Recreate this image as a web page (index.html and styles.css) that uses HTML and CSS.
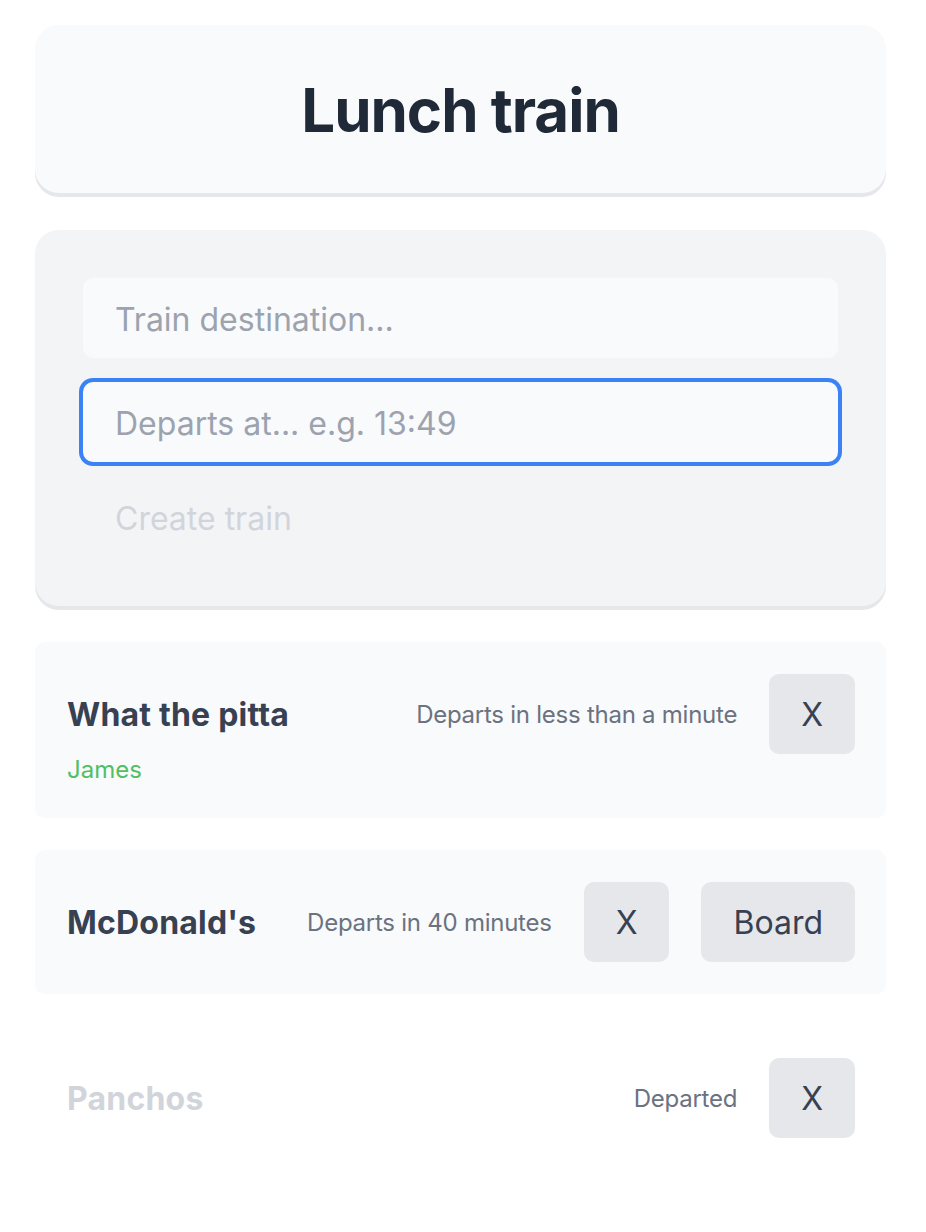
FILE: index.html
```html
<!DOCTYPE html>
<html lang="en">
<head>
<meta charset="utf-8">
<title>Lunch train</title>
<link rel="stylesheet" href="styles.css">
</head>
<body>
<main class="app">
  <header class="header-card">
    <h1 class="title">Lunch train</h1>
  </header>

  <form class="form-card">
    <input class="field" type="text" placeholder="Train destination...">
    <input class="field field-focus" type="text" placeholder="Departs at... e.g. 13:49">
    <button class="create-btn" type="button" disabled>Create train</button>
  </form>

  <section class="trains">
    <article class="train">
      <div class="train-row">
        <h2 class="train-name">What the pitta</h2>
        <div class="train-actions">
          <span class="train-status">Departs in less than a minute</span>
          <button class="btn" type="button">X</button>
        </div>
      </div>
      <div class="passenger">James</div>
    </article>

    <article class="train">
      <div class="train-row">
        <h2 class="train-name">McDonald's</h2>
        <div class="train-actions">
          <span class="train-status">Departs in 40 minutes</span>
          <button class="btn" type="button">X</button>
          <button class="btn" type="button">Board</button>
        </div>
      </div>
    </article>

    <article class="train train-departed">
      <div class="train-row">
        <h2 class="train-name">Panchos</h2>
        <div class="train-actions">
          <span class="train-status">Departed</span>
          <button class="btn" type="button">X</button>
        </div>
      </div>
    </article>
  </section>
</main>
</body>
</html>
```

FILE: styles.css
```css
* {
  box-sizing: border-box;
}

html, body {
  margin: 0;
  padding: 0;
  background: #ffffff;
}

body {
  font-family: Inter, "Noto Sans", "Liberation Sans", sans-serif;
  color: #374151;
}

.app {
  width: 851px;
  margin: 25px 0 0 35px;
}

.header-card {
  background: #f9fafb;
  border-radius: 24px;
  box-shadow: 0 4px 0 #e5e7eb;
  padding: 49px 48px 47px;
  margin-bottom: 37px;
  text-align: center;
}

.title {
  margin: 0;
  font-size: 60px;
  line-height: 72px;
  font-weight: 700;
  color: #1f2937;
  letter-spacing: -1px;
}

.form-card {
  background: #f3f4f6;
  border-radius: 24px;
  box-shadow: 0 4px 0 #e5e7eb;
  padding: 48px;
  margin: 0 0 36px 0;
  display: flex;
  flex-direction: column;
}

.field {
  display: block;
  width: 100%;
  height: 80px;
  padding: 17px 32px 15px;
  border: none;
  border-radius: 10px;
  background: #f9fafb;
  font-family: inherit;
  font-size: 32px;
  line-height: 48px;
  color: #374151;
  outline: none;
}

.field::placeholder {
  color: #9ca3af;
}

.field + .field {
  margin-top: 24px;
}

.field-focus {
  box-shadow: 0 0 0 4px #3b82f6;
}

.create-btn {
  margin-top: 16px;
  height: 80px;
  padding: 17px 32px 15px;
  border: none;
  background: transparent;
  font-family: inherit;
  font-size: 32px;
  line-height: 48px;
  color: #d1d5db;
  text-align: left;
}

.trains {
  display: flex;
  flex-direction: column;
  gap: 32px;
}

.train {
  background: #f9fafb;
  border-radius: 10px;
  padding: 32px 31px 32px 32px;
}

.train-departed {
  background: transparent;
}

.train-row {
  display: flex;
  align-items: center;
  justify-content: space-between;
}

.train-name {
  margin: 0;
  padding-top: 2px;
  font-size: 32px;
  line-height: 48px;
  font-weight: 700;
  color: #374151;
  letter-spacing: 0.2px;
}

.train-departed .train-name {
  color: #d1d5db;
}

.train-actions {
  display: flex;
  align-items: center;
  gap: 32px;
}

.train-status {
  padding-top: 2px;
  font-size: 24px;
  line-height: 32px;
  color: #6b7280;
  letter-spacing: -0.25px;
}

.btn {
  height: 80px;
  padding: 17px 32px 15px;
  border: none;
  border-radius: 10px;
  background: #e5e7eb;
  font-family: inherit;
  font-size: 32px;
  line-height: 48px;
  color: #374151;
}

.passenger {
  font-size: 24px;
  line-height: 32px;
  color: #52bf62;
}
```
